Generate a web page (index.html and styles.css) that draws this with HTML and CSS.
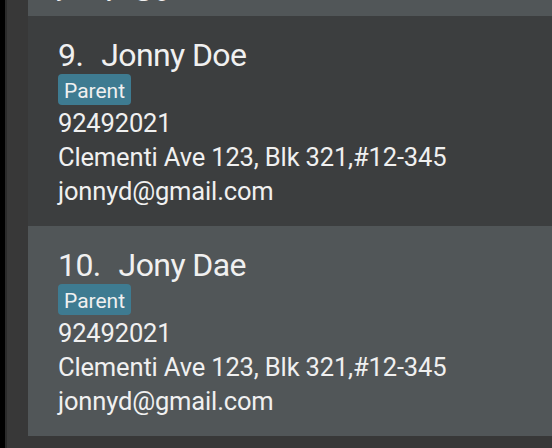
FILE: index.html
```html
<!DOCTYPE html>
<html lang="en">
<head>
<meta charset="utf-8">
<title>Contacts</title>
<link rel="stylesheet" href="styles.css">
</head>
<body>
<div class="app">
  <div class="edge"></div>
  <div class="edge-inner"></div>
  <div class="list">
    <div class="cards">
      <div class="card card--odd card--clipped">
        <div class="name-row"><span class="id">8.</span><span class="name">Jonny Doe</span></div>
        <div class="tags"><span class="tag">Parent</span></div>
        <div class="line">92492021</div>
        <div class="line">Clementi Ave 123, Blk 321,#12-345</div>
        <div class="line">jonnyd@gmail.com</div>
      </div>
      <div class="card card--even">
        <div class="name-row"><span class="id">9.</span><span class="name">Jonny Doe</span></div>
        <div class="tags"><span class="tag">Parent</span></div>
        <div class="line">92492021</div>
        <div class="line">Clementi Ave 123, Blk 321,#12-345</div>
        <div class="line">jonnyd@gmail.com</div>
      </div>
      <div class="card card--odd">
        <div class="name-row"><span class="id">10.</span><span class="name">Jony Dae</span></div>
        <div class="tags"><span class="tag">Parent</span></div>
        <div class="line">92492021</div>
        <div class="line">Clementi Ave 123, Blk 321,#12-345</div>
        <div class="line">jonnyd@gmail.com</div>
      </div>
    </div>
  </div>
</div>
</body>
</html>
```
FILE: styles.css
```css
html, body {
  margin: 0;
  padding: 0;
}
body {
  width: 552px;
  height: 448px;
  overflow: hidden;
  background: #383838;
  font-family: Roboto, "Liberation Sans", sans-serif;
  color: #f0f0f0;
}
.app {
  display: flex;
  height: 448px;
  overflow: hidden;
  background: #383838;
}
.edge {
  width: 5px;
  flex: none;
  background: #000000;
}
.edge-inner {
  width: 2px;
  flex: none;
  background: #2b2b2b;
}
.list {
  flex: 1;
  padding-left: 21px;
  overflow: hidden;
}
.cards {
  margin-top: -188px;
}
.card {
  padding: 20px 30px 18px;
}
.card--clipped {
  padding-bottom: 12px;
}
.card--even {
  background: #3c3e3f;
}
.card--odd {
  background: #515658;
}
.name-row {
  display: flex;
  gap: 18px;
  font-size: 32px;
  line-height: 38px;
  letter-spacing: -0.6px;
  white-space: nowrap;
}
.tags {
  display: flex;
  gap: 6px;
  margin-bottom: 1px;
}
.tag {
  background: #3e7b91;
  border-radius: 4px;
  padding: 3px 6px 0;
  height: 28px;
  font-size: 21px;
  line-height: 28px;
}
.line {
  font-size: 25.5px;
  line-height: 34px;
  letter-spacing: -0.15px;
  white-space: nowrap;
}
```
